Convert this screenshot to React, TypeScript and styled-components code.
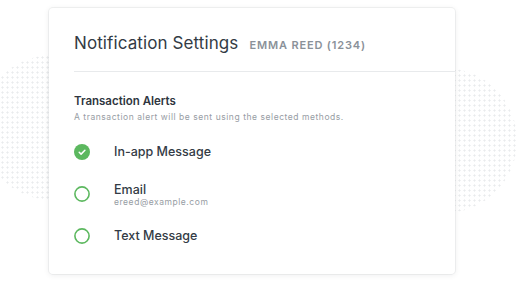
import React from 'react'
import styled, { createGlobalStyle } from 'styled-components'

const GlobalStyle = createGlobalStyle`
  html, body {
    margin: 0;
    padding: 0;
    background: #ffffff;
    font-family: Inter, "Noto Sans", "Liberation Sans", sans-serif;
    -webkit-font-smoothing: antialiased;
  }
`

type Method = {
  label: string
  detail?: string
  selected: boolean
}

const methods: Method[] = [
  { label: 'In-app Message', selected: true },
  { label: 'Email', detail: 'ereed@example.com', selected: false },
  { label: 'Text Message', selected: false },
]

const CheckIcon = ({ selected }: { selected: boolean }) =>
  selected ? (
    <svg width="16" height="16" viewBox="0 0 16 16">
      <circle cx="8" cy="8" r="8" fill="#5cb85f" />
      <path d="M5.2 8.2l1.9 1.9 3.8-3.8" fill="none" stroke="#fff" strokeWidth="1.5" strokeLinecap="round" strokeLinejoin="round" />
    </svg>
  ) : (
    <svg width="16" height="16" viewBox="0 0 16 16">
      <circle cx="8" cy="8" r="7.1" fill="none" stroke="#5cb85f" strokeWidth="1.6" />
    </svg>
  )

const App = () => {
  return (
    <Page>
      <GlobalStyle />
      <Dots $side="left" />
      <Dots $side="right" />
      <Card>
        <Header>
          <Title>Notification Settings</Title>
          <Account>Emma Reed (1234)</Account>
        </Header>
        <Section>
          <SectionTitle>Transaction Alerts</SectionTitle>
          <SectionHint>A transaction alert will be sent using the selected methods.</SectionHint>
          <Options>
            {methods.map((m) => (
              <Option key={m.label}>
                <IconSlot>
                  <CheckIcon selected={m.selected} />
                </IconSlot>
                <OptionText>
                  <OptionLabel>{m.label}</OptionLabel>
                  {m.detail && <OptionDetail>{m.detail}</OptionDetail>}
                </OptionText>
              </Option>
            ))}
          </Options>
        </Section>
      </Card>
    </Page>
  )
}

export default App

const Page = styled.div`
  position: relative;
  width: 517px;
  height: 282px;
  overflow: hidden;
  background: #ffffff;
  padding: 8px 0 0 49px;
  box-sizing: border-box;
`
const Dots = styled.div<{ $side: 'left' | 'right' }>`
  position: absolute;
  width: 145px;
  height: 145px;
  border-radius: 50%;
  top: ${(p) => (p.$side === 'left' ? '55px' : '68px')};
  left: ${(p) => (p.$side === 'left' ? '-20px' : '372px')};
  background-image: radial-gradient(circle, #e9ebed 0.9px, transparent 1.2px);
  background-size: 5px 5px;
  z-index: 0;
`
const Card = styled.div`
  position: relative;
  z-index: 1;
  width: 406px;
  height: 266px;
  background: #ffffff;
  border-radius: 4px;
  box-shadow: 0 0 0 1px rgba(20, 30, 40, 0.05), 0 1px 6px rgba(20, 30, 40, 0.08);
  padding-left: 25px;
  box-sizing: border-box;
`
const Header = styled.div`
  display: flex;
  align-items: baseline;
  gap: 11px;
  padding: 24px 0 17px;
  border-bottom: 1px solid #e8eaec;
`
const Title = styled.div`
  font-size: 17px;
  line-height: 22px;
  color: #333b45;
  font-weight: 400;
  letter-spacing: 0.1px;
`
const Account = styled.div`
  font-size: 11px;
  line-height: 14px;
  color: #8a9199;
  font-weight: 600;
  text-transform: uppercase;
  letter-spacing: 0.85px;
`
const Section = styled.div`
  padding-top: 22px;
`
const SectionTitle = styled.div`
  font-size: 11.5px;
  line-height: 14px;
  font-weight: 600;
  color: #2f3640;
`
const SectionHint = styled.div`
  margin-top: 3px;
  font-size: 8.5px;
  line-height: 12px;
  color: #979da4;
  letter-spacing: 0.55px;
`
const Options = styled.div`
  display: flex;
  flex-direction: column;
  gap: 22px;
  margin-top: 21px;
`
const Option = styled.div`
  display: flex;
  align-items: center;
`
const IconSlot = styled.div`
  width: 16px;
  height: 16px;
  margin-right: 24px;
  display: flex;
`
const OptionText = styled.div`
  display: flex;
  flex-direction: column;
`
const OptionLabel = styled.div`
  font-size: 12.5px;
  line-height: 16px;
  font-weight: 500;
  color: #333b45;
`
const OptionDetail = styled.div`
  font-size: 8.5px;
  line-height: 8px;
  color: #979da4;
  letter-spacing: 0.55px;
`
